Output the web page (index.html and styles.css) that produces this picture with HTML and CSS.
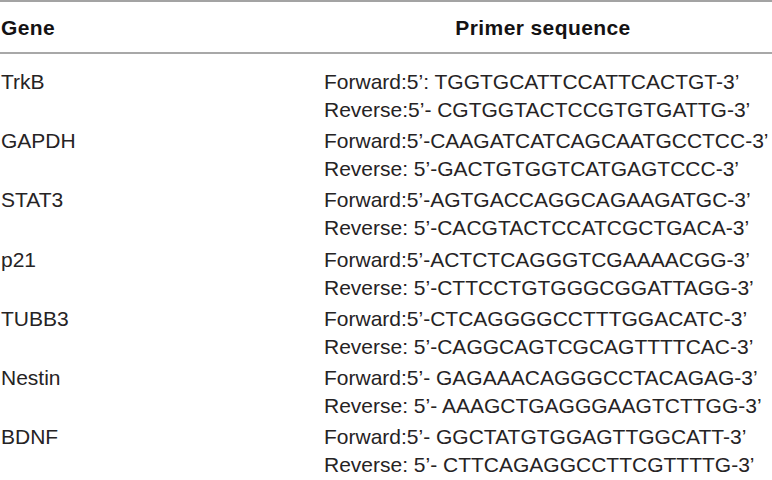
FILE: index.html
```html
<!DOCTYPE html>
<html>
<head>
<meta charset="utf-8">
<link rel="stylesheet" href="styles.css">
</head>
<body>
<table class="primers">
  <thead>
    <tr>
      <th class="gene-head">Gene</th>
      <th class="seq-head">Primer sequence</th>
    </tr>
  </thead>
  <tbody>
    <tr class="first"><td class="gene">TrkB</td><td class="seq"><div>Forward:5’: TGGTGCATTCCATTCACTGT-3’</div><div>Reverse:5’- CGTGGTACTCCGTGTGATTG-3’</div></td></tr>
    <tr><td class="gene">GAPDH</td><td class="seq"><div>Forward:5’-CAAGATCATCAGCAATGCCTCC-3’</div><div>Reverse: 5’-GACTGTGGTCATGAGTCCC-3’</div></td></tr>
    <tr><td class="gene">STAT3</td><td class="seq"><div>Forward:5’-AGTGACCAGGCAGAAGATGC-3’</div><div>Reverse: 5’-CACGTACTCCATCGCTGACA-3’</div></td></tr>
    <tr><td class="gene">p21</td><td class="seq"><div>Forward:5’-ACTCTCAGGGTCGAAAACGG-3’</div><div>Reverse: 5’-CTTCCTGTGGGCGGATTAGG-3’</div></td></tr>
    <tr><td class="gene">TUBB3</td><td class="seq"><div>Forward:5’-CTCAGGGGCCTTTGGACATC-3’</div><div>Reverse: 5’-CAGGCAGTCGCAGTTTTCAC-3’</div></td></tr>
    <tr><td class="gene">Nestin</td><td class="seq"><div>Forward:5’- GAGAAACAGGGCCTACAGAG-3’</div><div>Reverse: 5’- AAAGCTGAGGGAAGTCTTGG-3’</div></td></tr>
    <tr><td class="gene">BDNF</td><td class="seq"><div>Forward:5’- GGCTATGTGGAGTTGGCATT-3’</div><div>Reverse: 5’- CTTCAGAGGCCTTCGTTTTG-3’</div></td></tr>
  </tbody>
</table>
</body>
</html>
```
FILE: styles.css
```css
html, body {
  margin: 0;
  padding: 0;
  background: #ffffff;
}

.primers {
  width: 772px;
  table-layout: fixed;
  border-collapse: collapse;
  font-family: "Liberation Sans", Arial, sans-serif;
  font-size: 21px;
  line-height: 28px;
  color: #262324;
  white-space: nowrap;
}

.primers thead tr {
  border-top: 2px solid #a3a3a3;
  border-bottom: 2px solid #a8a8a8;
}

.primers th {
  font-weight: bold;
  color: #141213;
  padding: 12px 0 10px 0;
  vertical-align: middle;
  letter-spacing: 0.4px;
}

.gene-head {
  text-align: left;
  width: 323px;
  padding-left: 1px !important;
}

.seq-head {
  text-align: center;
  padding-right: 10px !important;
}

.primers td {
  vertical-align: top;
  padding: 1.6px 0;
}

.primers tr.first td {
  padding-top: 14px;
}

.gene {
  padding-left: 1px !important;
}

.seq {
  padding-left: 0;
}
```
